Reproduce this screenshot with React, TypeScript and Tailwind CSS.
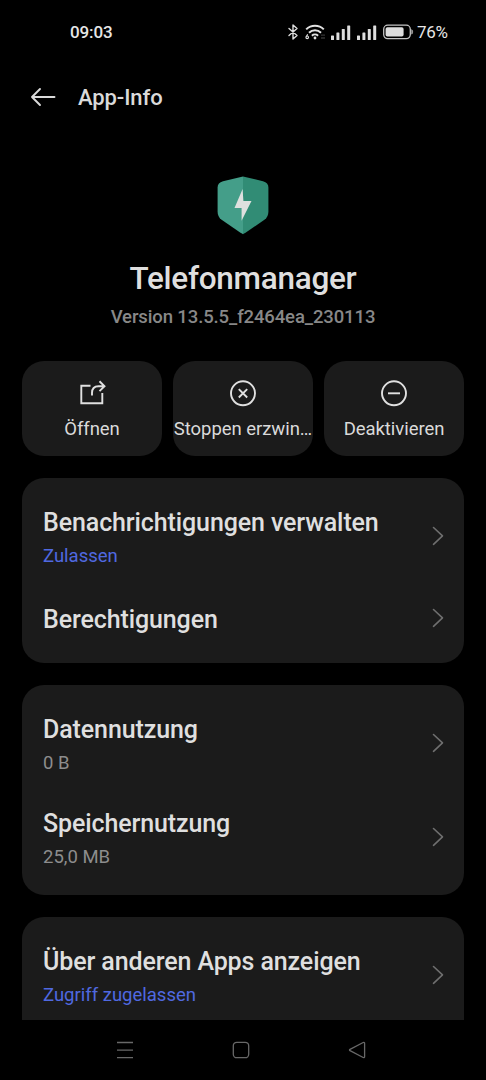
import type { ReactNode } from "react";

interface RowData {
  title: string;
  subtitle?: string;
  accent?: boolean;
}

const groups: RowData[][] = [
  [
    { title: "Benachrichtigungen verwalten", subtitle: "Zulassen", accent: true },
    { title: "Berechtigungen" },
  ],
  [
    { title: "Datennutzung", subtitle: "0 B" },
    { title: "Speichernutzung", subtitle: "25,0 MB" },
  ],
  [{ title: "Über anderen Apps anzeigen", subtitle: "Zugriff zugelassen", accent: true }],
];

function SignalBars() {
  return (
    <svg width="20" height="15" viewBox="0 0 20 15" fill="#dedede">
      <rect x="0" y="10.5" width="3" height="4.5" rx="0.6" />
      <rect x="5.4" y="7.5" width="3" height="7.5" rx="0.6" />
      <rect x="10.8" y="4" width="3" height="11" rx="0.6" />
      <rect x="16.2" y="0.5" width="3" height="14.5" rx="0.6" />
    </svg>
  );
}

function StatusBar() {
  return (
    <div className="flex h-16 shrink-0 items-center justify-between pl-[70px] pr-[38px] text-[#e6e6e6]">
      <span className="text-[17px] font-medium leading-none tracking-[-0.1px]">09:03</span>
      <div className="flex items-center">
        {/* Bluetooth */}
        <svg width="11" height="16" viewBox="0 0 11 16" fill="none" stroke="#dedede" strokeWidth="1.4" strokeLinejoin="round" strokeLinecap="round">
          <path d="M1 4.5l8 7-4 3.500V1l4 3.500-8 7" />
        </svg>
        {/* Wi-Fi */}
        <svg className="ml-[6px]" width="21" height="16" viewBox="0 0 21 16" fill="none" stroke="#e2e2e2" strokeWidth="2">
          <path d="M1.2 5.4a12.6 12.6 0 0 1 17.6 0" />
          <path d="M4 8.8a8.6 8.6 0 0 1 12 0" />
          <path d="M6.9 11.7a4.6 4.6 0 0 1 6.2 0" />
          <circle cx="10" cy="14" r="1.4" fill="#e2e2e2" stroke="none" />
          <path d="M2.6 10.3L1.5 12.6" strokeWidth="1.1" />
          <circle cx="2.2" cy="13.3" r="1.3" strokeWidth="1.1" />
          <path d="M16 11.2h4M16 14h4" stroke="#333" strokeWidth="1.3" />
        </svg>
        <div className="ml-[5px] flex gap-[6px]">
          <SignalBars />
          <SignalBars />
        </div>
        {/* Battery */}
        <svg className="ml-[6px]" width="31" height="16" viewBox="0 0 31 16">
          <rect x="0.7" y="1.2" width="26.6" height="13.4" rx="4" fill="none" stroke="#c4c4c4" strokeWidth="1.3" />
          <rect x="2.6" y="3.2" width="18" height="9.4" rx="1.8" fill="#dedede" />
          <path d="M28.7 5.6c1.3.8 1.3 3.8 0 4.6z" fill="#b5b5b5" stroke="#b5b5b5" strokeWidth="0.6" />
        </svg>
        <span className="ml-[3px] w-[31px] whitespace-nowrap text-[17px] leading-none tracking-[-0.3px]">76%</span>
      </div>
    </div>
  );
}

function ShieldLogo() {
  return (
    <svg width="52" height="60" viewBox="0 0 52 60">
      <path d="M26 0.500L6 5.200Q0.600 6.600 0.600 11.500V35.500Q0.600 41 4.600 43.800L23.500 56.800Q26 58.200 26 58.200Z" fill="#449e89" />
      <path d="M26 0.500L46 5.200Q51.400 6.600 51.400 11.500V35.500Q51.400 41 47.400 43.800L28.500 56.800Q26 58.200 26 58.200Z" fill="#318c75" />
      <path d="M25.600 13L17.500 32H24.600V44.700L34.500 25H26.400Z" fill="#dfe0df" />
    </svg>
  );
}

function Chevron() {
  return (
    <svg width="12" height="20" viewBox="0 0 12 20" fill="none" stroke="#6f6f6f" strokeWidth="1.6" strokeLinecap="round" strokeLinejoin="round">
      <path d="M1.500 1.500L10.500 9.800 1.500 18.300" />
    </svg>
  );
}

function ActionButton({ label, children }: { label: string; children: ReactNode }) {
  return (
    <button className="flex h-[95px] min-w-0 flex-1 flex-col items-center rounded-[22px] bg-[#1b1b1b] pt-[19px]">
      <svg width="28" height="28" viewBox="0 0 28 28" fill="none" stroke="#e0e0e0" strokeWidth="1.900">
        {children}
      </svg>
      <span className="mt-[9px] whitespace-nowrap text-[18.500px] leading-6 tracking-[-0.05px] text-[#dadada]">{label}</span>
    </button>
  );
}

function Row({ title, subtitle, accent }: RowData) {
  return (
    <div className={`flex items-center justify-between pl-[21px] pr-[20px] ${subtitle ? "h-[94px]" : "h-[69px]"}`}>
      <div className={subtitle ? "pt-1.5" : "pt-1"}>
        <div className="whitespace-nowrap text-[25px] font-medium leading-[34px] tracking-[-0.11px] text-[#dfdfdf]">{title}</div>
        {subtitle && (
          <div className={`text-[18.500px] leading-8 ${accent ? "text-[#5069e0]" : "text-[#8d8d8d]"}`}>{subtitle}</div>
        )}
      </div>
      <Chevron />
    </div>
  );
}

function NavBar() {
  return (
    <nav className="flex h-[60px] shrink-0 items-center justify-center gap-[98px] bg-black pr-[4px]">
      <svg width="18" height="18" viewBox="0 0 18 18" fill="none" stroke="#686868" strokeWidth="1.300">
        <path d="M1 1.500h16M1 9.200h16M1 16.700h16" />
      </svg>
      <svg width="18" height="18" viewBox="0 0 18 18" fill="none" stroke="#686868" strokeWidth="1.300">
        <rect x="1.300" y="1.300" width="15.400" height="15.400" rx="3.500" />
      </svg>
      <svg width="18" height="18" viewBox="0 0 18 18" fill="none" stroke="#686868" strokeWidth="1.300" strokeLinejoin="round">
        <path d="M15.200 1.500L2 8.300Q1 9 2 9.700L15.200 16.500Q16.600 17 16.600 15.500V2.500Q16.600 1 15.200 1.500Z" />
      </svg>
    </nav>
  );
}

export default function App() {
  return (
    <div className="flex h-[1080px] w-[486px] flex-col overflow-hidden bg-black font-['Roboto',sans-serif]">
      <StatusBar />

      <header className="flex h-[66px] shrink-0 items-center pl-[30px] text-[#dadada]">
        <svg width="26" height="20" viewBox="0 0 26 20" fill="none" stroke="#dadada" strokeWidth="1.900" strokeLinecap="round" strokeLinejoin="round">
          <path d="M10 2L2 10l8 8M2 10h22.500" />
        </svg>
        <h1 className="ml-[22px] pt-px text-[22px] font-medium leading-none tracking-[-0.1px]">App-Info</h1>
      </header>

      {/* App identity */}
      <section className="flex h-[231px] shrink-0 flex-col items-center pt-[46px]">
        <ShieldLogo />
        <h2 className="mt-[23px] text-[31.500px] font-medium leading-10 tracking-[-0.28px] text-[#dfdfdf]">Telefonmanager</h2>
        <p className="mt-[6px] text-[18.500px] font-medium leading-6 tracking-[-0.12px] text-[#888888]">Version 13.5.5_f2464ea_230113</p>
      </section>

      <main className="flex min-h-0 flex-1 flex-col gap-[22px] overflow-hidden px-[22px]">
        <div className="flex shrink-0 gap-[11px]">
          <ActionButton label="Öffnen">
            <path d="M12.500 5.800H3.300V23.300H24.300V13M14 15.500V13Q14 6.200 20.500 6.200H26M21.500 1.300L26.500 6.200l-5 5" />
          </ActionButton>
          <ActionButton label="Stoppen erzwin…">
            <circle cx="14" cy="13.300" r="12" />
            <path d="M9.800 9.100l8.400 8.400M18.200 9.100l-8.400 8.400" />
          </ActionButton>
          <ActionButton label="Deaktivieren">
            <circle cx="14" cy="13.300" r="12" />
            <path d="M8 13.300h12" />
          </ActionButton>
        </div>

        {groups.map((rows) => (
          <div key={rows[0].title} className="min-h-[140px] shrink-0 rounded-[22px] bg-[#1b1b1b] py-[11px]">
            {rows.map((row) => (
              <Row key={row.title} {...row} />
            ))}
          </div>
        ))}
      </main>

      <NavBar />
    </div>
  );
}
